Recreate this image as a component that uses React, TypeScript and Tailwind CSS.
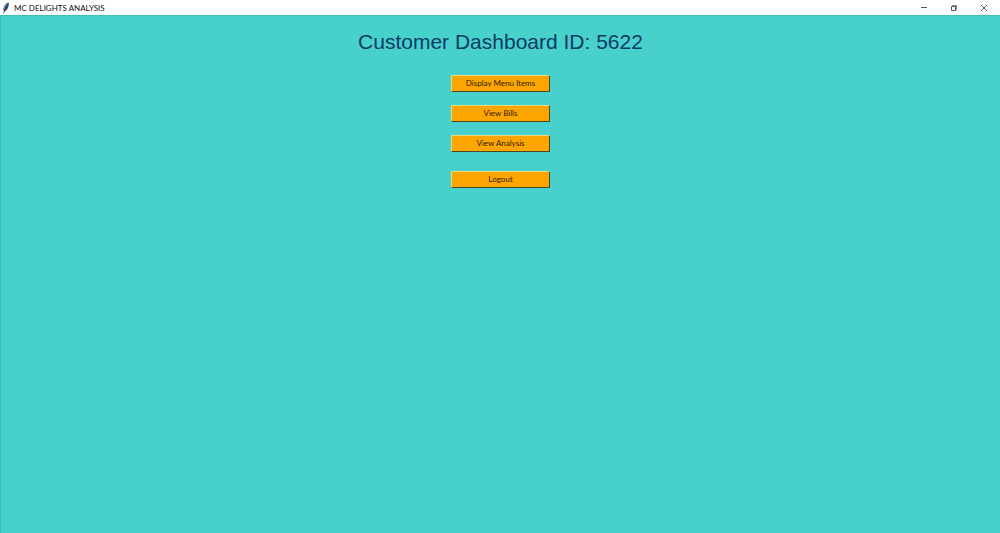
import type { ReactNode } from "react";

function WindowButton({ label, children }: { label: string; children: ReactNode }) {
  return (
    <button type="button" aria-label={label} className="flex h-full w-[30px] items-center justify-center">
      {children}
    </button>
  );
}

function FeatherIcon() {
  return (
    <svg width="8" height="12" viewBox="0 0 8 12" aria-hidden="true">
      <path d="M6.2 .4C3.6 1.2 1.4 4.4 1.3 7.6L2.2 9.6C4.8 8.8 6.9 5 6.9 1.4Z" fill="#34507c" />
      <path d="M5.8 .7C3.6 1.8 1.8 4.8 1.6 7.3L2.3 8C3 5.2 4.6 2.6 5.8 .7Z" fill="#8298b8" />
      <path d="M5.4 3C4 5.2 2.3 8 1.7 11.4" fill="none" stroke="#202838" strokeWidth=".8" />
    </svg>
  );
}

function TitleBar() {
  return (
    <header className="flex h-[15px] shrink-0 items-center justify-between bg-white">
      <div className="flex items-center gap-1 pl-[2px]">
        <FeatherIcon />
        <span className="font-['Lato','Noto_Sans',sans-serif] text-[8px] leading-[14px] text-[#101010]">
          MC DELIGHTS ANALYSIS
        </span>
      </div>
      <div className="flex h-full pr-px">
        <WindowButton label="Minimize">
          <svg width="8" height="8" viewBox="0 0 8 8" fill="none" stroke="#555" aria-hidden="true">
            <path d="M1 3.5H7" />
          </svg>
        </WindowButton>
        <WindowButton label="Restore">
          <svg width="8" height="8" viewBox="0 0 8 8" fill="none" stroke="#555" aria-hidden="true">
            <path d="M1.5 2.5H5.5V6.5H1.5Z" />
            <path d="M2.5 2.5V1.5H6.5V5.5H5.5" strokeOpacity=".7" />
          </svg>
        </WindowButton>
        <WindowButton label="Close">
          <svg width="8" height="8" viewBox="0 0 8 8" fill="none" stroke="#444" strokeWidth=".9" aria-hidden="true">
            <path d="M1 1L7 7M7 1L1 7" />
          </svg>
        </WindowButton>
      </div>
    </header>
  );
}

function MenuButton({ children }: { children: ReactNode }) {
  return (
    <button
      type="button"
      className="flex h-[17px] w-[99px] items-center justify-center border border-t-[#e8dc80] border-r-[#4c4620] border-b-[#4c4620] border-l-[#e8dc80] bg-[#ffa500] font-['Lato','Noto_Sans',sans-serif] text-[8px] leading-[15px] text-[#2b1c00]"
    >
      {children}
    </button>
  );
}

export default function App() {
  return (
    <div className="flex min-h-screen flex-col bg-[#48d1cc]">
      <TitleBar />
      <main className="flex flex-1 flex-col items-center border-t border-l border-[#3fbdb9] pt-[13px]">
        <h1 className="font-['Liberation_Sans',Arial,sans-serif] text-[21px] leading-[26px] text-[#0b3a66]">
          Customer Dashboard ID: 5622
        </h1>
        <nav aria-label="Dashboard" className="mt-5 flex flex-col items-center gap-[19px]">
          <div className="flex flex-col gap-[13px]">
            <MenuButton>Display Menu Items</MenuButton>
            <MenuButton>View Bills</MenuButton>
            <MenuButton>View Analysis</MenuButton>
          </div>
          <MenuButton>Logout</MenuButton>
        </nav>
      </main>
    </div>
  );
}
